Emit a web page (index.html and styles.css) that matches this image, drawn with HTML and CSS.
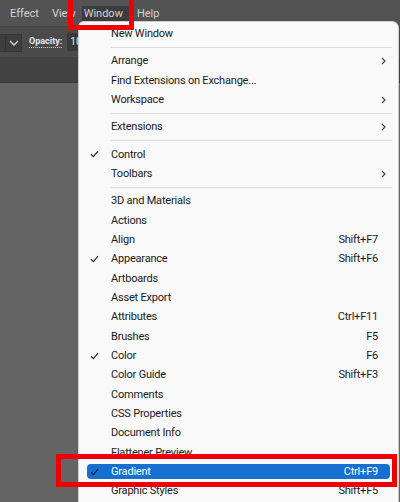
FILE: index.html
```html
<!DOCTYPE html>
<html>
<head>
<meta charset="utf-8">
<link rel="stylesheet" href="styles.css">
</head>
<body>
<div class="app">
  <div class="menubar">
    <span class="mi">Effect</span>
    <span class="mi">View</span>
    <span class="mi active">Window</span>
    <span class="mi">Help</span>
  </div>
  <div class="controlbar">
    <div class="dropdown"><span class="dd-field"></span><span class="dd-btn"><svg width="10" height="6" viewBox="0 0 10 6"><polyline points="1,1 5,5 9,1" fill="none" stroke="#d8d8d8" stroke-width="1.4"/></svg></span></div>
    <span class="opacity-label">Opacity:</span>
    <span class="opacity-input">100%</span>
  </div>
  <div class="tabband"></div>
  <div class="canvas"></div>
</div>

<div class="menu">
  <div class="row"><span class="chk"></span><span class="lbl">New Window</span></div>
  <div class="sep"></div>
  <div class="row"><span class="chk"></span><span class="lbl">Arrange</span><span class="arr"><svg width="5" height="8" viewBox="0 0 5 8"><polyline points="1,1 4,4 1,7" fill="none" stroke="#444" stroke-width="1.2"/></svg></span></div>
  <div class="row"><span class="chk"></span><span class="lbl">Find Extensions on Exchange...</span></div>
  <div class="row"><span class="chk"></span><span class="lbl">Workspace</span><span class="arr"><svg width="5" height="8" viewBox="0 0 5 8"><polyline points="1,1 4,4 1,7" fill="none" stroke="#444" stroke-width="1.2"/></svg></span></div>
  <div class="sep"></div>
  <div class="row"><span class="chk"></span><span class="lbl">Extensions</span><span class="arr"><svg width="5" height="8" viewBox="0 0 5 8"><polyline points="1,1 4,4 1,7" fill="none" stroke="#444" stroke-width="1.2"/></svg></span></div>
  <div class="sep"></div>
  <div class="row"><span class="chk"><svg width="9" height="8" viewBox="0 0 9 8"><polyline points="1,4.2 3.4,6.6 8,1.2" fill="none" stroke="#2b2b2b" stroke-width="1.3"/></svg></span><span class="lbl">Control</span></div>
  <div class="row"><span class="chk"></span><span class="lbl">Toolbars</span><span class="arr"><svg width="5" height="8" viewBox="0 0 5 8"><polyline points="1,1 4,4 1,7" fill="none" stroke="#444" stroke-width="1.2"/></svg></span></div>
  <div class="sep"></div>
  <div class="row"><span class="chk"></span><span class="lbl">3D and Materials</span></div>
  <div class="row"><span class="chk"></span><span class="lbl">Actions</span></div>
  <div class="row"><span class="chk"></span><span class="lbl">Align</span><span class="sc">Shift+F7</span></div>
  <div class="row"><span class="chk"><svg width="9" height="8" viewBox="0 0 9 8"><polyline points="1,4.2 3.4,6.6 8,1.2" fill="none" stroke="#2b2b2b" stroke-width="1.3"/></svg></span><span class="lbl">Appearance</span><span class="sc">Shift+F6</span></div>
  <div class="row"><span class="chk"></span><span class="lbl">Artboards</span></div>
  <div class="row"><span class="chk"></span><span class="lbl">Asset Export</span></div>
  <div class="row"><span class="chk"></span><span class="lbl">Attributes</span><span class="sc">Ctrl+F11</span></div>
  <div class="row"><span class="chk"></span><span class="lbl">Brushes</span><span class="sc">F5</span></div>
  <div class="row"><span class="chk"><svg width="9" height="8" viewBox="0 0 9 8"><polyline points="1,4.2 3.4,6.6 8,1.2" fill="none" stroke="#2b2b2b" stroke-width="1.3"/></svg></span><span class="lbl">Color</span><span class="sc">F6</span></div>
  <div class="row"><span class="chk"></span><span class="lbl">Color Guide</span><span class="sc">Shift+F3</span></div>
  <div class="row"><span class="chk"></span><span class="lbl">Comments</span></div>
  <div class="row"><span class="chk"></span><span class="lbl">CSS Properties</span></div>
  <div class="row"><span class="chk"></span><span class="lbl">Document Info</span></div>
  <div class="row"><span class="chk"></span><span class="lbl">Flattener Preview</span></div>
  <div class="row selected"><span class="chk"><svg width="9" height="8" viewBox="0 0 9 8"><polyline points="1,4.2 3.4,6.6 8,1.2" fill="none" stroke="#14233d" stroke-width="1.3"/></svg></span><span class="lbl">Gradient</span><span class="sc">Ctrl+F9</span></div>
  <div class="row"><span class="chk"></span><span class="lbl">Graphic Styles</span><span class="sc">Shift+F5</span></div>
</div>

<div class="redbox rb-window"></div>
<div class="redbox rb-gradient"></div>
</body>
</html>
```

FILE: styles.css
```css
html, body {
  margin: 0;
  padding: 0;
}
body {
  width: 400px;
  height: 502px;
  overflow: hidden;
  background: #646464;
  font-family: Roboto, "Noto Sans", sans-serif;
  position: relative;
}
.app {
  display: flex;
  flex-direction: column;
  height: 502px;
}
.menubar {
  height: 27px;
  background: #535353;
  display: flex;
  align-items: flex-start;
  padding-top: 6px;
  padding-left: 10px;
  border-bottom: 1px solid #454545;
  box-sizing: border-box;
}
.mi {
  color: #d4d4d4;
  font-size: 11px;
  line-height: 14px;
  padding-top: 1px;
}
.mi:nth-child(2) {
  margin-left: 13px;
}
.mi.active {
  background: #3c3c3c;
  padding: 1px 7px 0 2px;
  margin-left: 6px;
}
.mi:nth-child(4) {
  margin-left: 7px;
}
.controlbar {
  height: 30px;
  background: #4b4b4b;
  display: flex;
  align-items: center;
  box-sizing: border-box;
}
.dropdown {
  display: flex;
  height: 18px;
  width: 22px;
  background: #3d3d3d;
  border: 1px solid #363636;
  border-left: none;
  box-sizing: border-box;
  margin-top: 1px;
}
.dd-field {
  width: 5px;
  border-right: 1px solid #333;
}
.dd-btn {
  flex: 1;
  display: flex;
  align-items: center;
  justify-content: center;
}
.opacity-label {
  color: #e8e8e8;
  font-size: 9px;
  font-weight: bold;
  margin-left: 7px;
  border-bottom: 1px dotted #cfcfcf;
  line-height: 11px;
}
.opacity-input {
  margin-left: 5px;
  background: #393939;
  color: #e8e8e8;
  font-size: 10px;
  padding: 3px 3px;
  line-height: 12px;
}
.tabband {
  height: 25px;
  background: #424242;
  border-bottom: 1px solid #3a3a3a;
}
.canvas {
  flex: 1;
  background: #646464;
}
.menu {
  position: absolute;
  left: 78px;
  top: 21px;
  width: 321px;
  height: 490px;
  background: #f9f9f9;
  border: 1px solid #cfcfcf;
  border-bottom: none;
  border-radius: 6px 7px 0 0;
  box-sizing: border-box;
  padding-top: 2px;
  color: #1a1a1a;
  font-size: 11px;
  letter-spacing: -0.2px;
}
.row {
  height: 19.33px;
  display: flex;
  align-items: center;
  margin: 0 8px;
  border-radius: 4px;
  position: relative;
}
.chk {
  width: 24px;
  display: flex;
  justify-content: flex-start;
  padding-left: 3px;
  box-sizing: border-box;
}
.lbl {
  flex: 1;
  white-space: nowrap;
}
.sc {
  margin-right: 12px;
}
.arr {
  margin-right: 4px;
  display: flex;
}
.sep {
  height: 1px;
  background: #dcdcdc;
  margin: 3.5px 6px 3.5px 32px;
}
.row.selected::before {
  content: "";
  position: absolute;
  left: 0;
  right: 0;
  top: 2px;
  bottom: 2px;
  background: #1670d0;
  border-radius: 4px;
  z-index: 0;
}
.row.selected > span {
  position: relative;
  z-index: 1;
}
.row.selected .lbl,
.row.selected .sc {
  color: #ffffff;
}
.redbox {
  position: absolute;
  border: 5px solid #ee0000;
  box-sizing: border-box;
}
.rb-window {
  left: 68px;
  top: -6px;
  width: 66px;
  height: 36px;
}
.rb-gradient {
  left: 56px;
  top: 454px;
  width: 341px;
  height: 33px;
}
```
